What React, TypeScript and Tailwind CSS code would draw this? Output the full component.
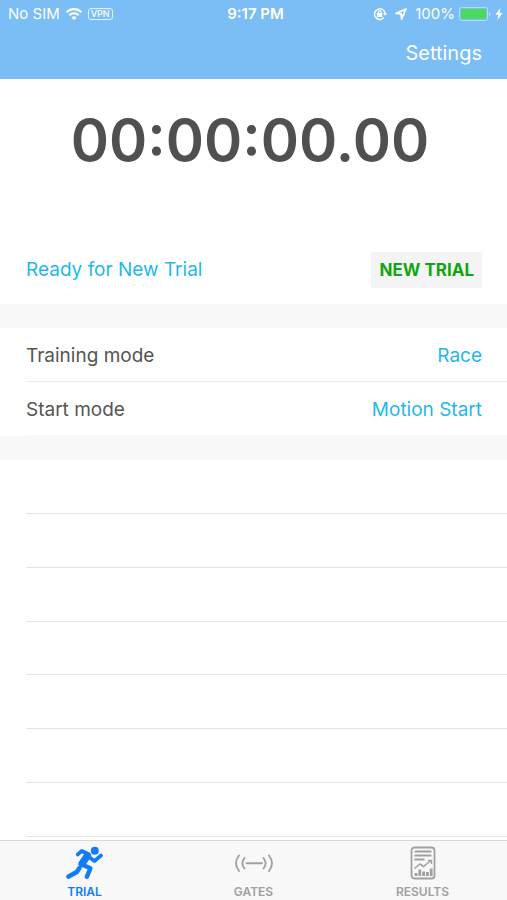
import type { ReactNode } from "react";
import clsx from "clsx";

interface Setting {
  label: string;
  value: string;
}

interface Tab {
  label: string;
  active: boolean;
  icon: ReactNode;
}

const settings: Setting[] = [
  { label: "Training mode", value: "Race" },
  { label: "Start mode", value: "Motion Start" },
];

const emptyRows = [1, 2, 3, 4, 5, 6, 7];

function WifiIcon() {
  return (
    <svg viewBox="0 0 18 14" className="h-[14px] w-[18px]" fill="none" stroke="currentColor" aria-hidden="true">
      <path d="M1.5 5.2a10.8 10.8 0 0 1 15 0" strokeWidth="2.2" />
      <path d="M4.3 8.2a6.8 6.8 0 0 1 9.4 0" strokeWidth="2.1" />
      <path d="M9 13 6.4 10.4a3.8 3.8 0 0 1 5.2 0Z" fill="currentColor" stroke="none" />
    </svg>
  );
}

function RotationLockIcon() {
  return (
    <svg viewBox="0 0 14 14" className="h-[14px] w-[14px]" fill="none" stroke="currentColor" aria-hidden="true">
      <path d="M10.8 10.6A5.3 5.3 0 1 1 12 6.2" strokeWidth="1.4" />
      <path d="M10 6h4l-2 2.8Z" fill="currentColor" stroke="none" />
      <rect x="3.8" y="6" width="5.6" height="4" rx="0.5" fill="currentColor" stroke="none" />
      <path d="M5.1 6.5V5.3a1.5 1.5 0 0 1 3 0v1.2" strokeWidth="1.2" />
    </svg>
  );
}

function LocationIcon() {
  return (
    <svg viewBox="0 0 12 12" className="h-[12px] w-[12px]" fill="none" stroke="currentColor" aria-hidden="true">
      <path d="M11 1 1.2 5.4l5 .4.4 5.200Z" strokeWidth="1.800" strokeLinejoin="round" />
    </svg>
  );
}

function BatteryIcon() {
  return (
    <svg viewBox="0 0 32 14" className="h-[14px] w-[32px]" aria-hidden="true">
      <rect x="0.5" y="0.5" width="28" height="13" rx="2" fill="none" stroke="#b4daf8" />
      <rect x="2" y="2" width="25" height="10" rx="1" fill="#4cd95f" />
      <path d="M30 5v4q1.5-.6 1.5-2T30 5Z" fill="#b4daf8" />
    </svg>
  );
}

function BoltIcon() {
  return (
    <svg viewBox="0 0 8 12" className="h-[12px] w-[8px]" fill="currentColor" aria-hidden="true">
      <path d="M5.4 0 .3 6.8h3L2.4 12l5.3-7.1h-3Z" />
    </svg>
  );
}

function RunnerIcon() {
  return (
    <svg viewBox="0 0 38 34" className="h-[34px] w-[38px]" fill="none" stroke="currentColor" strokeLinecap="round" strokeLinejoin="round" aria-hidden="true">
      <circle cx="28.8" cy="4.8" r="4" fill="currentColor" stroke="none" />
      <path d="m11.8 8.4 4-3.4 6.200 3" strokeWidth="3.800" />
      <path d="M21.500 9.500 16 17.800" strokeWidth="7.200" />
      <path d="m23 11 5.400 4 6.600-5.500" strokeWidth="3.800" />
      <path d="m17.500 19.300 6.900 3-3.600 8.500" strokeWidth="4.400" />
      <path d="M13.200 22.300 10.800 26l-8.200 4.600" strokeWidth="4.600" />
    </svg>
  );
}

function GatesIcon() {
  return (
    <svg viewBox="0 0 38 34" className="h-[34px] w-[38px]" fill="none" stroke="currentColor" strokeWidth="1.9" strokeLinecap="round" aria-hidden="true">
      <path d="M4 9.5c-4 5.2-4 10.3 0 15.5M9.5 12c-2.8 3.5-2.8 7 0 10.5M11.5 17.3h15.5M28.5 12c2.8 3.5 2.8 7 0 10.5M34 9.5c4 5.2 4 10.3 0 15.5" />
    </svg>
  );
}

function ResultsIcon() {
  return (
    <svg viewBox="0 0 26 34" className="h-[34px] w-[26px]" fill="none" stroke="currentColor" aria-hidden="true">
      <rect x="1.5" y="1.5" width="23" height="31" rx="3" strokeWidth="1.8" />
      <path d="M4.5 5.5h17M4.5 9.5h17M4.5 13.5h10" strokeWidth="2" />
      <path d="m4.500 22.500 5.500-4.500 3.500 2.500 7.500-6" strokeWidth="1.600" />
      <path d="M18 14.500h3.500V18" strokeWidth="1.400" />
      <path d="M6 30v-3M9.800 30v-6.500M13.600 30v-4.500M17.400 30v-4M21.200 30v-7.500" strokeWidth="2.800" />
    </svg>
  );
}

const tabs: Tab[] = [
  { label: "TRIAL", active: true, icon: <RunnerIcon /> },
  { label: "GATES", active: false, icon: <GatesIcon /> },
  { label: "RESULTS", active: false, icon: <ResultsIcon /> },
];

function StatusBar() {
  return (
    <div className="grid h-[27px] grid-cols-3 items-center pr-1 pl-2 text-[15px] leading-5">
      <div className="flex items-center gap-[5px] whitespace-nowrap">
        <span>No SIM</span>
        <WifiIcon />
        <span className="rounded-[3px] border border-white/80 px-[2px] text-[9px] leading-[10px] font-medium">VPN</span>
      </div>
      <span className="text-center font-semibold">9:17 PM</span>
      <div className="flex items-center justify-end gap-1 whitespace-nowrap">
        <div className="flex items-center gap-2">
          <RotationLockIcon />
          <LocationIcon />
        </div>
        <span className="ml-1 text-[15px]">100%</span>
        <BatteryIcon />
        <BoltIcon />
      </div>
    </div>
  );
}

export default function App() {
  return (
    <div className="flex min-h-screen flex-col bg-white font-['Inter','Liberation_Sans',sans-serif] text-[19px] leading-6 text-[#555555]">
      <header className="bg-[#7bbdf5] text-white">
        <StatusBar />
        <nav className="flex h-[52px] items-center justify-end px-[25px]">
          <button type="button" className="text-[20px]">
            Settings
          </button>
        </nav>
      </header>

      <main className="flex flex-1 flex-col">
        <section className="pt-[31px] pr-[25px] pb-4 pl-[26px]">
          <h1 className="mr-2 text-center text-[58px] leading-[60px] font-semibold text-[#4f5151]">00:00:00.00</h1>
          <div className="mt-[82px] flex items-center justify-between">
            <p className="text-[#1fb8ea]">Ready for New Trial</p>
            <button type="button" className="h-9 bg-[#f4f4f4] px-2 text-[17px] font-bold text-[#12a512]">
              NEW TRIAL
            </button>
          </div>
        </section>

        <section className="border-y-[24px] border-[#f8f8f8]">
          {settings.map((setting) => (
            <div key={setting.label} className="group pl-[26px]">
              <div className="flex h-[54px] items-center justify-between border-b border-[#ebebeb] pt-[2px] pr-[25px] group-last:border-[#f8f8f8]">
                <span>{setting.label}</span>
                <button type="button" className="text-[#1fb8ea]">
                  {setting.value}
                </button>
              </div>
            </div>
          ))}
        </section>

        <div className="flex flex-1 flex-col pb-[3px] pl-[26px]">
          {emptyRows.map((row) => (
            <div key={row} className="min-h-10 flex-1 border-b border-[#e4e4e4]" />
          ))}
        </div>
      </main>

      <nav className="grid h-[60px] grid-cols-3 border-t border-[#d8d8d8] bg-[#f8f8f8]">
        {tabs.map((tab) => (
          <button
            key={tab.label}
            type="button"
            className={clsx(
              "flex flex-col items-center pt-[5px] text-[12px] leading-4 font-semibold",
              tab.active ? "text-[#117cf6]" : "text-[#a0a0a0]",
            )}
          >
            {tab.icon}
            <span className="mt-1">{tab.label}</span>
          </button>
        ))}
      </nav>
    </div>
  );
}
